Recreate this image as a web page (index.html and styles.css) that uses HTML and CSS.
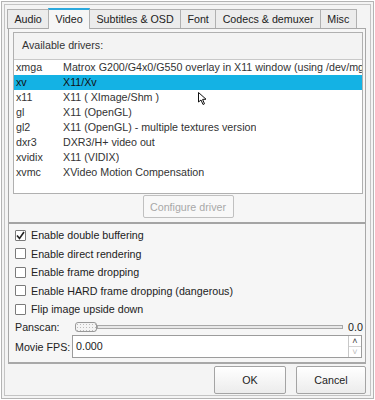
FILE: index.html
```html
<!DOCTYPE html>
<html lang="en">
<head>
    <meta charset="UTF-8">
    <title>Preferences - Video</title>
    <link rel="stylesheet" href="styles.css">
</head>
<body>
    <div class="window">
        <div class="frame">
            <div class="tabs">
                <div class="tab">Audio</div>
                <div class="tab active">Video</div>
                <div class="tab">Subtitles &amp; OSD</div>
                <div class="tab">Font</div>
                <div class="tab">Codecs &amp; demuxer</div>
                <div class="tab">Misc</div>
            </div>
            <div class="pane">
                <div class="drivers">
                    <div class="drivers-head">Available drivers:</div>
                    <div class="driver-list">
                        <div class="row"><span class="name">xmga</span><span class="desc">Matrox G200/G4x0/G550 overlay in X11 window (using /dev/mga_vid)</span></div>
                        <div class="row selected"><span class="name">xv</span><span class="desc">X11/Xv</span></div>
                        <div class="row"><span class="name">x11</span><span class="desc">X11 ( XImage/Shm )</span></div>
                        <div class="row"><span class="name">gl</span><span class="desc">X11 (OpenGL)</span></div>
                        <div class="row"><span class="name">gl2</span><span class="desc">X11 (OpenGL) - multiple textures version</span></div>
                        <div class="row"><span class="name">dxr3</span><span class="desc">DXR3/H+ video out</span></div>
                        <div class="row"><span class="name">xvidix</span><span class="desc">X11 (VIDIX)</span></div>
                        <div class="row"><span class="name">xvmc</span><span class="desc">XVideo Motion Compensation</span></div>
                    </div>
                </div>
                <div class="configure">
                    <button class="btn disabled">Configure driver</button>
                </div>
                <div class="splitter"></div>
                <div class="options">
                    <label class="check"><span class="box"><svg width="9" height="9" viewBox="0 0 9 9"><path d="M1 4.5 L3.5 7.5 L8 1" fill="none" stroke="#222" stroke-width="1.6"/></svg></span>Enable double buffering</label>
                    <label class="check"><span class="box"></span>Enable direct rendering</label>
                    <label class="check"><span class="box"></span>Enable frame dropping</label>
                    <label class="check"><span class="box"></span>Enable HARD frame dropping (dangerous)</label>
                    <label class="check"><span class="box"></span>Flip image upside down</label>
                    <div class="slider-row">
                        <span class="field-label">Panscan:</span>
                        <div class="slider">
                            <span class="handle"></span>
                            <span class="track"></span>
                        </div>
                        <span class="slider-value">0.0</span>
                    </div>
                    <div class="fps-row">
                        <span class="field-label">Movie FPS:</span>
                        <div class="spinbox">
                            <span class="spin-text">0.000</span>
                            <span class="spin-buttons">
                                <span class="spin-up">&#708;</span>
                                <span class="spin-down">&#709;</span>
                            </span>
                        </div>
                    </div>
                </div>
            </div>
            <div class="dialog-buttons">
                <button class="btn ok">OK</button>
                <button class="btn cancel">Cancel</button>
            </div>
        </div>
        <svg class="pointer" width="10" height="14" viewBox="0 0 10 14">
            <path d="M0.5 0.5 L0.5 10 L3 8 L5 12.5 L6.5 11.8 L4.6 7.4 L8 7.2 Z" fill="#fff" stroke="#111" stroke-width="1"/>
        </svg>
    </div>
</body>
</html>
```

FILE: styles.css
```css
body {
    margin: 0;
    background: #fff;
    font-family: "Liberation Sans", Arial, sans-serif;
    font-size: 10.7px;
    color: #222;
}
.window {
    position: relative;
    margin: 1px;
    width: 373px;
    height: 398px;
    box-sizing: border-box;
    border: 1px solid #b4b4b4;
    padding: 2px;
    background: #f4f4f4;
}
.frame {
    height: 100%;
    box-sizing: border-box;
    border: 1px solid #c4c4c4;
    padding: 3px 3px 1px 2px;
    display: flex;
    flex-direction: column;
}
.tabs {
    display: flex;
    height: 20px;
}
.tab {
    box-sizing: border-box;
    height: 20px;
    margin-top: 1px;
    padding: 3px 6.4px 0;
    border: 1px solid #b0b0b0;
    border-bottom: none;
    margin-right: -1px;
    background: #ececec;
    color: #222;
    white-space: nowrap;
}
.tab.active {
    margin-top: 0;
    padding-top: 3px;
    border-top: 2px solid #2aa8dd;
    background: #f6f6f6;
    position: relative;
    z-index: 1;
    height: 21px;
}
.pane {
    width: 358px;
    height: 336px;
    margin-left: 1px;
    box-sizing: border-box;
    border: 1px solid #a8a8a8;
    border-bottom: 2px solid #a8a8a8;
    background: #f6f6f6;
    padding: 3px 2px 0 4px;
    display: flex;
    flex-direction: column;
}
.drivers {
    width: 350px;
    height: 162px;
    box-sizing: border-box;
    border: 1px solid #b0b0b0;
    display: flex;
    flex-direction: column;
}
.drivers-head {
    height: 27px;
    box-sizing: border-box;
    border-bottom: 1px solid #c8c8c8;
    padding: 6px 0 0 8px;
    background: #f3f3f3;
    color: #333;
}
.driver-list {
    flex: 1;
    background: #fff;
    overflow: hidden;
}
.row {
    display: flex;
    height: 15px;
    line-height: 15px;
    white-space: nowrap;
    color: #333;
}
.row.selected {
    background: #14b2e4;
    color: #111;
}
.row .name {
    width: 47px;
    flex: none;
    padding-left: 2px;
}
.row .desc {
    overflow: hidden;
}
.configure {
    display: flex;
    justify-content: center;
    width: 350px;
    padding-top: 1px;
}
.btn {
    font-family: "Liberation Sans", Arial, sans-serif;
    font-size: 10.7px;
    color: #222;
    border: 1px solid #a4a4a4;
    border-radius: 2px;
    background: linear-gradient(#ffffff, #ececec);
    padding: 0;
}
.btn.disabled {
    width: 91px;
    height: 23px;
    color: #a8a8a8;
    border-color: #c0c0c0;
    background: #f8f8f8;
}
.splitter {
    height: 2px;
    margin: 4px -2px 0 -4px;
    background: #a4a4a4;
}
.options {
    display: flex;
    flex-direction: column;
    padding: 2px 0 0 2px;
}
.check {
    display: flex;
    align-items: center;
    height: 18.5px;
    white-space: nowrap;
}
.box {
    width: 11px;
    height: 11px;
    box-sizing: border-box;
    border: 1px solid #7a7a7a;
    border-radius: 1px;
    background: #fff;
    margin-right: 5px;
    display: flex;
    align-items: center;
    justify-content: center;
}
.slider-row {
    display: flex;
    align-items: center;
    height: 16px;
}
.field-label {
    width: 57px;
    flex: none;
}
.slider {
    display: flex;
    align-items: center;
    width: 268px;
    margin-left: 3px;
}
.handle {
    width: 22px;
    height: 10px;
    box-sizing: border-box;
    border: 1px solid #999;
    border-radius: 3px;
    background: radial-gradient(circle, #bbb 0.5px, transparent 0.8px) 0 0 / 3px 3px, #f4f4f4;
}
.track {
    flex: 1;
    height: 4px;
    box-sizing: border-box;
    border: 1px solid #a8a8a8;
    background: #e8e8e8;
}
.slider-value {
    margin-left: 5px;
}
.fps-row {
    display: flex;
    align-items: center;
    height: 24px;
}
.spinbox {
    display: flex;
    width: 290px;
    height: 23px;
    box-sizing: border-box;
    border: 1px solid #9c9c9c;
    background: #fff;
}
.spin-text {
    flex: 1;
    padding: 4px 0 0 3px;
}
.spin-buttons {
    display: flex;
    flex-direction: column;
    width: 12px;
    border-left: 1px solid #c8c8c8;
    font-size: 9px;
    line-height: 10px;
    text-align: center;
}
.spin-up {
    height: 10px;
    color: #444;
    border-bottom: 1px solid #d4d4d4;
}
.spin-down {
    color: #bbb;
}
.dialog-buttons {
    display: flex;
    justify-content: flex-end;
    gap: 10px;
    margin-top: 2px;
    padding-right: 1px;
}
.btn.ok {
    width: 72px;
    height: 28px;
}
.btn.cancel {
    width: 70px;
    height: 28px;
}
.pointer {
    position: absolute;
    left: 196px;
    top: 90px;
}
```
